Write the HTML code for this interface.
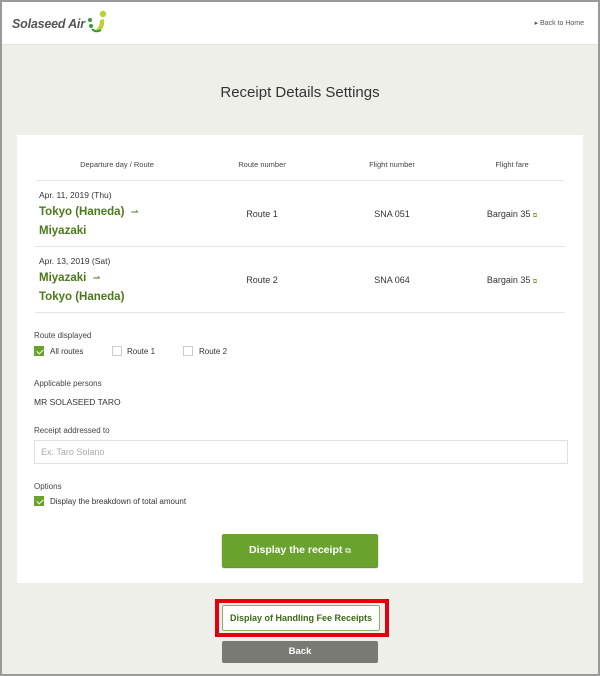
<!DOCTYPE html>
<html><head><meta charset="utf-8"><style>
*{box-sizing:border-box;margin:0;padding:0}
html,body{width:600px;height:676px;overflow:hidden}
body{font-family:"Liberation Sans",sans-serif;background:#efefea;border:2px solid #999;position:relative;color:#333}
.hdr{position:absolute;left:0;top:0;width:596px;height:43px;background:#fff;border-bottom:1px solid #e4e4de}
.logo{position:absolute;left:10px;top:15px;font-weight:bold;font-style:italic;font-size:12.5px;color:#555;letter-spacing:-0.2px}
.home{position:absolute;right:14px;top:17px;font-size:7px;color:#555}
h1{position:absolute;top:82px;left:0;width:596px;text-align:center;font-weight:normal;font-size:15px;color:#333}
.card{position:absolute;left:15px;top:133px;width:566px;height:448px;background:#fff}
.th{position:absolute;top:25px;font-size:7.5px;color:#444;text-align:center}
.line{position:absolute;left:18px;width:530px;height:1px;background:#e5e5e5}
.date{position:absolute;left:22px;font-size:8.5px;color:#333}
.city{position:absolute;left:22px;font-size:11.5px;color:#4a7a1a;font-weight:bold}
.city span{font-weight:normal}
.cell{position:absolute;font-size:9px;color:#333;text-align:center}
.lbl{position:absolute;left:17px;font-size:8px;color:#444}
.cb{position:absolute;width:10px;height:10px;border:1px solid #ccc;background:#fff}
.cb.on{background:#6aa22e;border-color:#6aa22e}
.cb.on::after{content:"";position:absolute;left:2.5px;top:0.5px;width:3px;height:5px;border:solid #fff;border-width:0 1.3px 1.3px 0;transform:rotate(45deg)}
.cbt{position:absolute;font-size:8px;color:#333}
.inp{position:absolute;left:17px;top:305px;width:534px;height:24px;border:1px solid #e0e0e0;font-size:9px;color:#aaa;padding:6px 6px}
.btn{position:absolute;left:205px;top:399px;width:156px;height:33px;background:#6aa22e;border-radius:2px;color:#fff;font-weight:bold;font-size:10.5px;text-align:center;line-height:33px;box-shadow:0 1px 1px #4e7a22}
.red{position:absolute;left:213px;top:597px;width:174px;height:38px;border:4px solid #e5000f}
.hf{position:absolute;left:220px;top:603px;width:158px;height:26px;border:1px solid #8ab463;background:#fff;border-radius:2px;font-size:9px;font-weight:bold;color:#3c6a14;text-align:center;line-height:24px}
.back{position:absolute;left:220px;top:639px;width:156px;height:22px;background:#7a7a74;border-radius:2px;color:#fff;font-weight:bold;font-size:9.5px;text-align:center;line-height:22px}
</style></head><body>
<div class="hdr">
<div class="logo">Solaseed Air</div>
<svg style="position:absolute;left:84px;top:7px" width="24" height="26" viewBox="0 0 24 26"><circle cx="17" cy="5" r="3.2" fill="#b7d334"/><circle cx="4" cy="11" r="2" fill="#3a9a35"/><circle cx="5" cy="17" r="2" fill="#3a9a35"/><path d="M18 10 L18 15 Q17 23 8 22 Q14 19 14 11 Z" fill="#b7d334"/><path d="M6 20 Q10 24 15 21" stroke="#3a9a35" stroke-width="2" fill="none"/></svg>
<div class="home">▸ Back to Home</div>
</div>
<h1>Receipt Details Settings</h1>
<div class="card">
<div class="th" style="left:45px;width:110px">Departure day / Route</div>
<div class="th" style="left:195px;width:100px">Route number</div>
<div class="th" style="left:325px;width:100px">Flight number</div>
<div class="th" style="left:445px;width:100px">Flight fare</div>
<div class="line" style="top:45px"></div>
<div class="date" style="top:55px">Apr. 11, 2019 (Thu)</div>
<div class="city" style="top:71px">Tokyo (Haneda) &nbsp;<span style="font-size:9px">⇀</span></div>
<div class="city" style="top:90px">Miyazaki</div>
<div class="cell" style="left:195px;width:100px;top:74px">Route 1</div>
<div class="cell" style="left:325px;width:100px;top:74px">SNA 051</div>
<div class="cell" style="left:445px;width:100px;top:74px">Bargain 35 <span style="color:#6aa22e;font-size:6px">⧉</span></div>
<div class="line" style="top:111px"></div>
<div class="date" style="top:121px">Apr. 13, 2019 (Sat)</div>
<div class="city" style="top:137px">Miyazaki &nbsp;<span style="font-size:9px">⇀</span></div>
<div class="city" style="top:156px">Tokyo (Haneda)</div>
<div class="cell" style="left:195px;width:100px;top:140px">Route 2</div>
<div class="cell" style="left:325px;width:100px;top:140px">SNA 064</div>
<div class="cell" style="left:445px;width:100px;top:140px">Bargain 35 <span style="color:#6aa22e;font-size:6px">⧉</span></div>
<div class="line" style="top:177px"></div>
<div class="lbl" style="top:196px">Route displayed</div>
<div class="cb on" style="left:17px;top:211px"></div><div class="cbt" style="left:33px;top:212px">All routes</div>
<div class="cb" style="left:95px;top:211px"></div><div class="cbt" style="left:110px;top:212px">Route 1</div>
<div class="cb" style="left:166px;top:211px"></div><div class="cbt" style="left:182px;top:212px">Route 2</div>
<div class="lbl" style="top:244px">Applicable persons</div>
<div class="lbl" style="top:262px;font-size:8.5px;color:#333">MR SOLASEED TARO</div>
<div class="lbl" style="top:291px">Receipt addressed to</div>
<div class="inp">Ex. Taro Solano</div>
<div class="lbl" style="top:347px">Options</div>
<div class="cb on" style="left:17px;top:361px"></div><div class="cbt" style="left:33px;top:362px">Display the breakdown of total amount</div>
<div class="btn">Display the receipt <span style="font-size:8px;font-weight:normal">⧉</span></div>
</div>
<div class="red"></div>
<div class="hf">Display of Handling Fee Receipts</div>
<div class="back">Back</div>
</body></html>
